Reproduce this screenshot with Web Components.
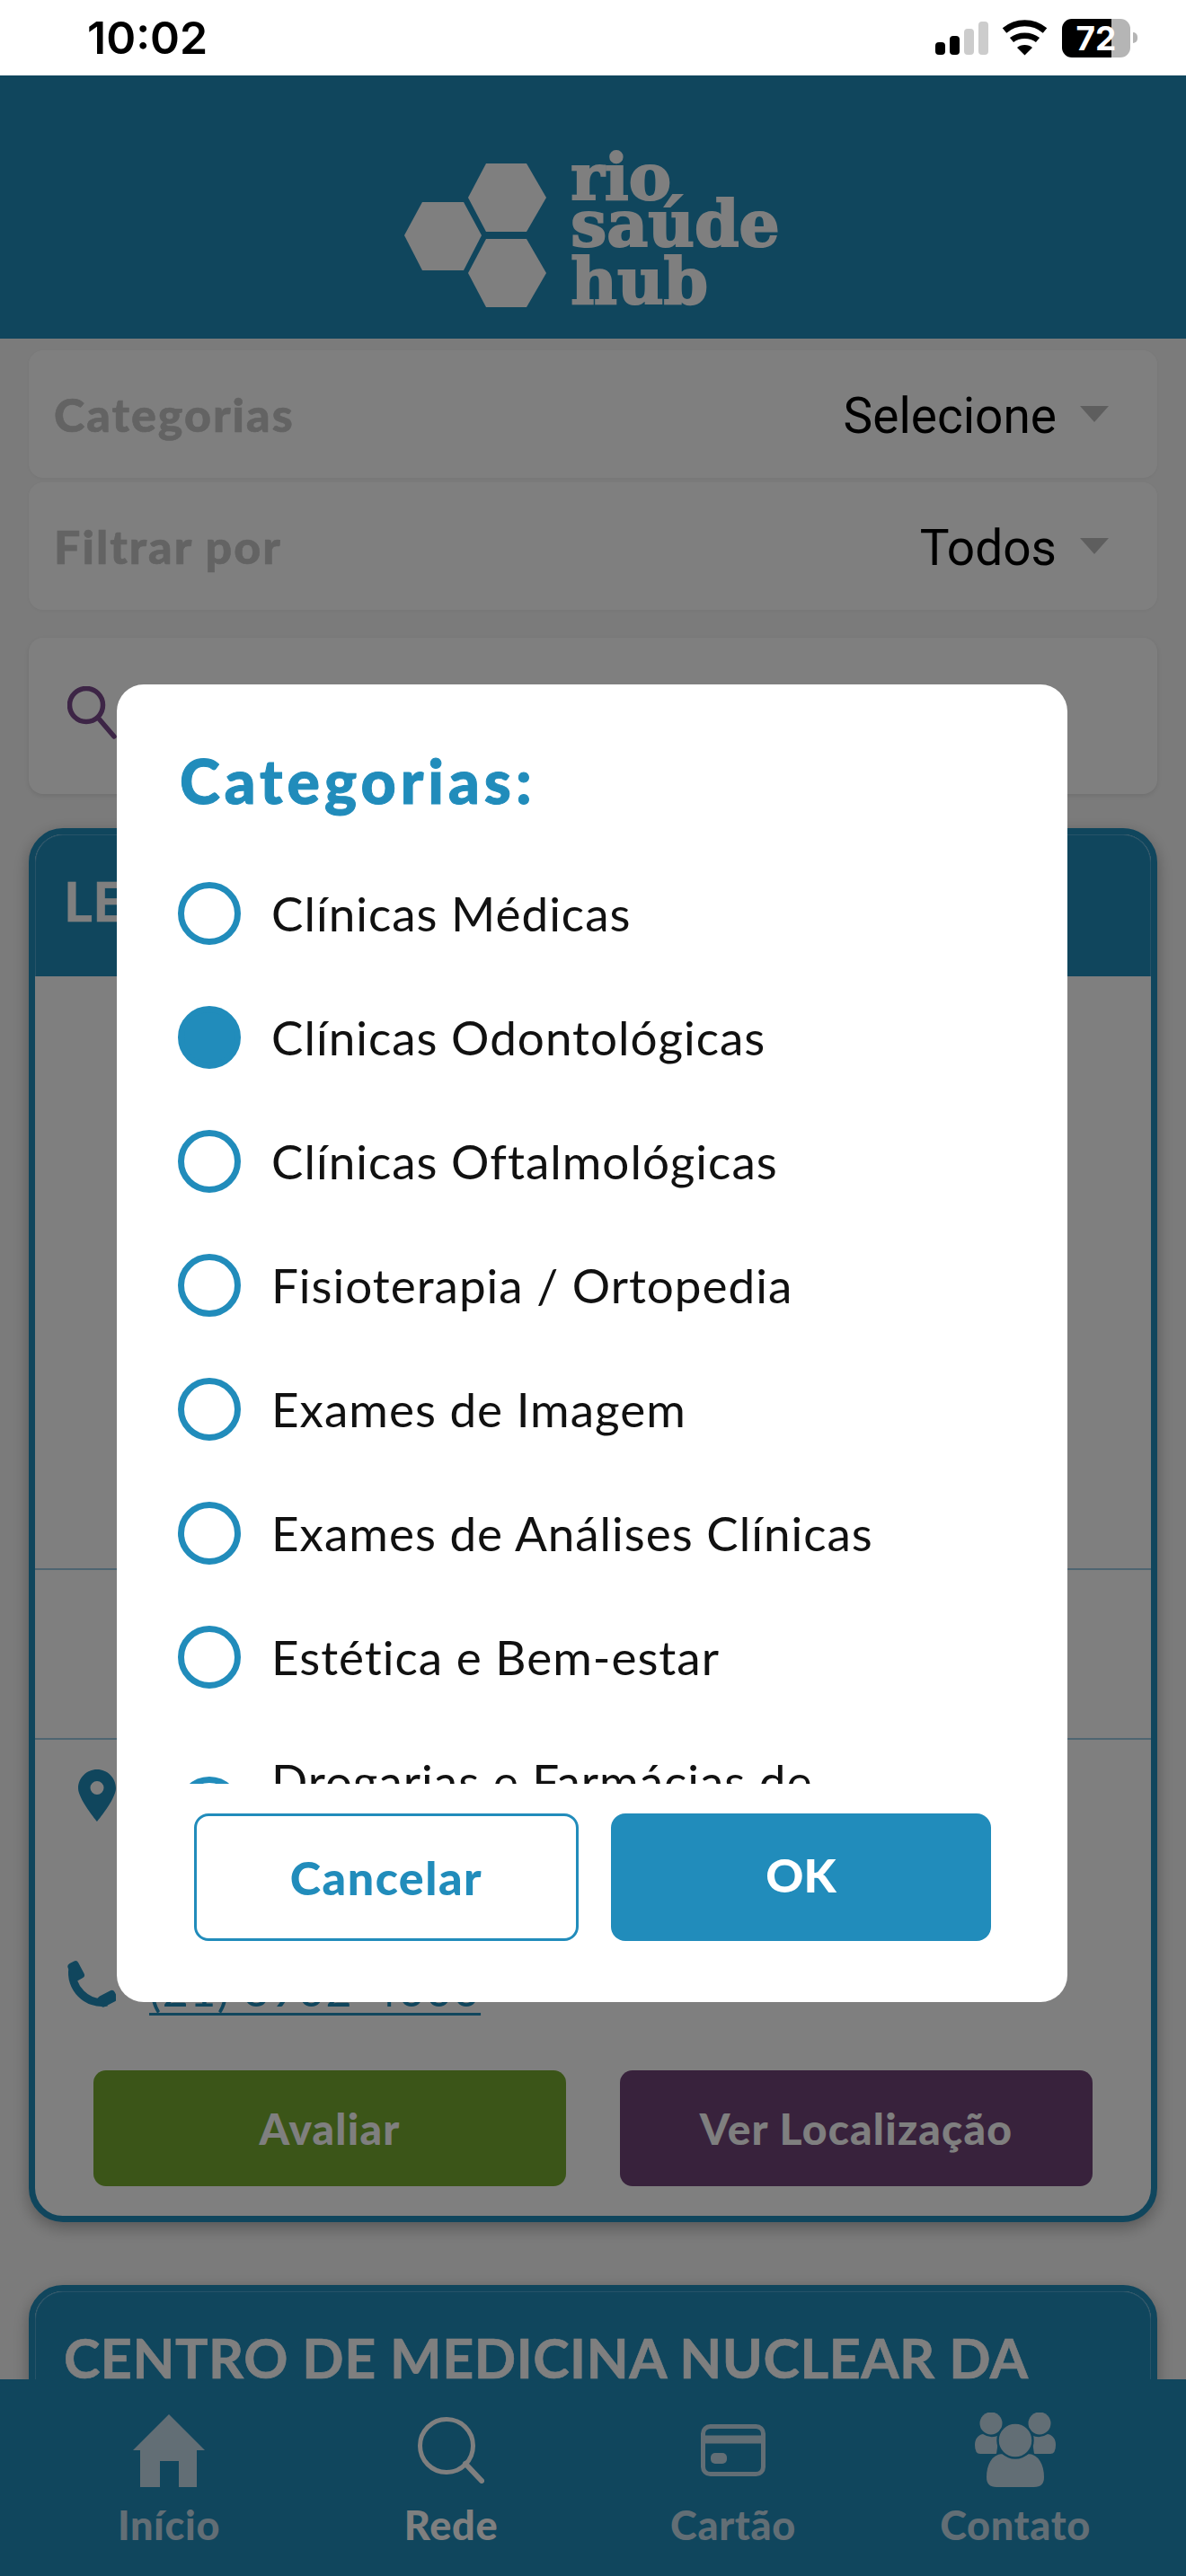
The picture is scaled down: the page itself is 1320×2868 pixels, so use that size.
<!DOCTYPE html>
<html lang="pt-BR">
<head>
<meta charset="utf-8">
<title>Rio Saúde Hub</title>
<style>
    html, body { margin: 0; padding: 0; background: #f7f7f7; }
    body { width: 1320px; height: 2868px; overflow: hidden; font-family: "Lato", "Liberation Sans", sans-serif; }
</style>
</head>
<body>
<app-shell>
    <status-bar></status-bar>
    <app-header></app-header>
    <page-content>
        <filter-row label="Categorias" value="Selecione"></filter-row>
        <filter-row label="Filtrar por" value="Todos"></filter-row>
        <search-box></search-box>
        <clinic-card title-text="LE" phone="(21) 3902-4000"></clinic-card>
        <clinic-card title-text="CENTRO DE MEDICINA NUCLEAR DA"></clinic-card>
    </page-content>
    <tab-bar></tab-bar>
</app-shell>
<category-dialog>
    <radio-row>Clínicas Médicas</radio-row>
    <radio-row checked>Clínicas Odontológicas</radio-row>
    <radio-row>Clínicas Oftalmológicas</radio-row>
    <radio-row>Fisioterapia / Ortopedia</radio-row>
    <radio-row>Exames de Imagem</radio-row>
    <radio-row>Exames de Análises Clínicas</radio-row>
    <radio-row>Estética e Bem-estar</radio-row>
    <radio-row>Drogarias e Farmácias de Manipulação</radio-row>
</category-dialog>

<script>
class Base extends HTMLElement {
    constructor() {
        super();
        this.shadowDOM = this.attachShadow({ mode: "open" });
    }

    connectedCallback() {
        this.render();
    }
}

class AppShell extends Base {
    render() {
        this.shadowDOM.innerHTML = `
        <style>
        :host { display: flex; flex-direction: column; width: 1320px; height: 2868px; overflow: hidden; }
        </style>
        <slot></slot>`;
    }
}

class StatusBar extends Base {
    render() {
        this.shadowDOM.innerHTML = `
        <style>
        :host { display: flex; align-items: center; justify-content: space-between; height: 84px; flex: none; background: #fff; padding: 0 54px 0 97px; box-sizing: border-box; }
        .time { font: 600 50px "Inter", sans-serif; color: #000; }
        .icons { display: flex; align-items: center; }
        .bars { display: flex; align-items: flex-end; gap: 5px; height: 37px; margin-right: 15px; }
        .bars i { display: block; width: 11px; border-radius: 4px; background: #000; }
        .bars i.off { background: #ccc; }
        .wifi { display: block; margin-right: 16px; }
        .battery { position: relative; width: 76px; height: 43px; border-radius: 11px; background: linear-gradient(90deg, #000 72.4%, #b5b5b5 72.4%); color: #fff; font: 700 37px "Inter", sans-serif; text-align: center; line-height: 43px; }
        .cap { width: 5px; height: 12px; margin-left: 3px; background: #b5b5b5; border-radius: 0 6px 6px 0; }
        </style>
        <span class="time">10:02</span>
        <div class="icons">
            <div class="bars">
                <i style="height:14px"></i><i style="height:21px"></i><i class="off" style="height:29px"></i><i class="off" style="height:37px"></i>
            </div>
            <svg class="wifi" width="51" height="40" viewBox="0 0 51 40" fill="none" stroke="#000">
                <path d="M3 12C16 1 35 1 48 12" stroke-width="7"/>
                <path d="M11 22.5C19 16 32 16 40 22.5" stroke-width="6.5"/>
                <path d="M17 31C21 27 30 27 34 31L25.5 39.5Z" fill="#000" stroke="none"/>
            </svg>
            <div class="battery">72</div>
            <div class="cap"></div>
        </div>`;
    }
}

class AppHeader extends Base {
    render() {
        this.shadowDOM.innerHTML = `
        <style>
        :host { display: flex; justify-content: center; height: 293px; flex: none; background: #218cbb; padding-top: 83px; box-sizing: border-box; }
        .logo { display: flex; gap: 27px; height: 180px; margin-right: 2px; }
        svg { display: block; margin-top: 15px; }
        .word { display: flex; flex-direction: column; font: 700 71px "DejaVu Serif", serif; color: #fff; -webkit-text-stroke: 2px #fff; }
        .word span { display: block; }
        </style>
        <div class="logo">
            <svg width="158" height="160" viewBox="0 0 158 160" fill="#fff">
                <polygon points="71,38 91,0 136,0 158,38 136,76 91,76"/>
                <polygon points="71,122 91,84 136,84 158,122 136,160 91,160"/>
                <polygon points="0,80 20,43 66,43 86,80 66,119 20,119"/>
            </svg>
            <div class="word">
                <span style="line-height:58px;margin-top:1px">rio</span>
                <span style="line-height:52px;margin-top:-3px">saúde</span>
                <span style="line-height:62px;margin-top:7px">hub</span>
            </div>
        </div>`;
    }
}

class PageContent extends Base {
    render() {
        this.shadowDOM.innerHTML = `
        <style>
        :host { display: flex; flex-direction: column; flex: 1; min-height: 0; overflow: hidden; padding: 13px 32px 0; background: #f7f7f7; }
        </style>
        <slot></slot>`;
    }
}

class FilterRow extends Base {
    render() {
        this.shadowDOM.innerHTML = `
        <style>
        :host { display: flex; align-items: center; flex: none; height: 142px; margin-bottom: 5px; padding: 0 54px 0 28px; box-sizing: border-box; background: #fff; border-radius: 16px; box-shadow: 0 1px 4px rgba(0,0,0,.05); }
        .label { flex: 1; font: 900 52px "Lato", sans-serif; letter-spacing: 2px; color: #c6c6c6; -webkit-text-stroke: .6px #c6c6c6; }
        .value { font: 400 55px "Roboto", sans-serif; color: #000; margin: 3px 26px 0 0; }
        .arrow { width: 0; height: 0; border-left: 16px solid transparent; border-right: 16px solid transparent; border-top: 18px solid #bdbdbd; }
        </style>
        <span class="label">${this.getAttribute("label")}</span>
        <span class="value">${this.getAttribute("value")}</span>
        <span class="arrow"></span>`;
    }
}

class SearchBox extends Base {
    render() {
        this.shadowDOM.innerHTML = `
        <style>
        :host { display: flex; align-items: center; flex: none; height: 174px; margin: 26px 0 38px; padding-left: 43px; box-sizing: border-box; background: #fff; border-radius: 16px; box-shadow: 0 2px 6px rgba(0,0,0,.1); }
        svg { display: block; margin-top: -6px; }
        </style>
        <svg width="60" height="60" viewBox="0 0 60 60" fill="none" stroke="#7a4a8c" stroke-width="5.5">
            <circle cx="21" cy="21" r="18.5"/>
            <path d="M34 35L52 56" stroke-linecap="round"/>
        </svg>`;
    }
}

class ClinicCard extends Base {
    render() {
        const phone = this.getAttribute("phone");
        this.shadowDOM.innerHTML = `
        <style>
        :host { display: block; flex: none; margin-bottom: 70px; border: 7px solid #218cbb; border-radius: 38px; background: #fff; box-shadow: 0 6px 18px rgba(0,0,0,.3); }
        header { height: 158px; padding: 41px 0 0 31px; box-sizing: border-box; background: #218cbb; border: 1px solid #4ea6d0; border-bottom: 0; border-radius: 31px 31px 0 0; }
        h2 { margin: 0; font: 700 61px/64px "Lato", sans-serif; letter-spacing: .5px; color: #fff; white-space: nowrap; -webkit-text-stroke: .6px #fff; }
        .photo { height: 659px; border-bottom: 2px solid #9ccbe2; box-sizing: content-box; margin-top: 0; }
        .rating { height: 187px; border-bottom: 2px solid #9ccbe2; }
        .address { height: 246px; padding: 33px 0 0 48px; box-sizing: border-box; }
        .phone { display: flex; align-items: flex-start; height: 122px; padding-left: 34px; }
        .phone a { font: 400 50px/60px "Lato", sans-serif; letter-spacing: 1.5px; color: #218cbb; text-decoration: underline 3px; text-underline-offset: 7px; margin: 2px 0 0 37px; }
        .actions { display: grid; grid-template-columns: 1fr 1fr; gap: 60px; padding: 0 65px 33px; }
        .actions button { height: 129px; border: 0; border-radius: 14px; color: #fff; font: 900 48px "Lato", sans-serif; letter-spacing: 1.2px; }
        </style>
        <header><h2>${this.getAttribute("title-text")}</h2></header>
        ${phone ? `
        <div class="photo"></div>
        <div class="rating"></div>
        <div class="address">
            <svg width="42" height="58" viewBox="0 0 42 58"><path fill="#218cbb" fill-rule="evenodd" d="M21 0C9.4 0 0 9.4 0 21c0 12 21 37 21 37s21-25 21-37C42 9.4 32.6 0 21 0zm0 13a7.500 7.500 0 1 1 0 15 7.500 7.500 0 0 1 0-15z"/></svg>
        </div>
        <div class="phone">
            <svg width="56" height="54" viewBox="0 0 56 54" fill="#218cbb">
                <path d="M8 8C4 30 24 50 46 46" fill="none" stroke="#218cbb" stroke-width="9"/>
                <rect x="5" y="1" width="13" height="21" rx="4" transform="rotate(-28 11 11)"/>
                <rect x="36" y="36" width="21" height="13" rx="4" transform="rotate(-28 46 42)"/>
            </svg>
            <a>${phone}</a>
        </div>
        <div class="actions">
            <button style="background:#76aa30">Avaliar</button>
            <button style="background:#704478">Ver Localização</button>
        </div>` : ""}`;
    }
}

class TabBar extends Base {
    render() {
        this.shadowDOM.innerHTML = `
        <style>
        :host { display: grid; grid-template-columns: repeat(4, 314px); flex: none; height: 219px; padding: 37px 0 0 31px; box-sizing: border-box; background: #218cbb; position: relative; }
        .tab { display: flex; flex-direction: column; align-items: center; color: #c4dceb; font: 900 45px/50px "Lato", sans-serif; letter-spacing: .7px; }
        .tab.on { color: #fff; }
        .icon { display: flex; align-items: center; justify-content: center; height: 84px; margin-bottom: 16px; }
        svg { display: block; }
        </style>
        <div class="tab">
            <div class="icon"><svg width="80" height="81" viewBox="0 0 80 81" fill="#c4dceb"><path fill-rule="evenodd" d="M40 0L80 40H71V81H8V40H0ZM30 52V81H51V52Z"/></svg></div>
            Início
        </div>
        <div class="tab on">
            <div class="icon"><svg width="74" height="74" viewBox="0 0 74 74" fill="none" stroke="#fff"><circle cx="32" cy="32" r="29.500" stroke-width="5"/><path d="M53 52L71 71" stroke-width="6" stroke-linecap="round"/></svg></div>
            Rede
        </div>
        <div class="tab">
            <div class="icon"><svg width="72" height="58" viewBox="0 0 72 58" fill="none" stroke="#c4dceb"><rect x="2.500" y="2.500" width="67" height="53" rx="8" stroke-width="5"/><path d="M2 17H70" stroke-width="9"/><rect x="11" y="32" width="18" height="12" rx="5" fill="#c4dceb" stroke="none"/></svg></div>
            Cartão
        </div>
        <div class="tab">
            <div class="icon"><svg width="90" height="84" viewBox="0 0 90 84" fill="#c4dceb">
                <circle cx="18" cy="12" r="12.500"/><circle cx="72" cy="12" r="12.500"/>
                <path d="M0 36C0 30 3 25 9 24Q18 30 27 25L24 46H6Q0 46 0 36Z"/>
                <path d="M90 36C90 30 87 25 81 24Q72 30 63 25L66 46H84Q90 46 90 36Z"/>
                <path d="M12 72C12 58 18 46 30 45Q45 54 60 45C72 46 78 58 78 72Q78 84 66 84H24Q12 84 12 72Z" stroke="#218cbb" stroke-width="2"/>
                <circle cx="45" cy="31" r="19.500" stroke="#218cbb" stroke-width="2.500"/>
            </svg></div>
            Contato
        </div>`;
    }
}

class RadioRow extends Base {
    render() {
        const on = this.hasAttribute("checked");
        this.shadowDOM.innerHTML = `
        <style>
        :host { display: flex; align-items: center; padding: 39px 60px 39px 68px; gap: 34px; font: 400 53px/60px "Lato", sans-serif; letter-spacing: 1px; color: #111; }
        .dot { flex: none; width: 70px; height: 70px; box-sizing: border-box; border-radius: 50%; border: 7px solid #218cbb; background: ${on ? "#218cbb" : "#fff"}; margin: -5px 0; }
        </style>
        <span class="dot"></span>
        <span><slot></slot></span>`;
    }
}

class CategoryDialog extends Base {
    render() {
        this.shadowDOM.innerHTML = `
        <style>
        :host { position: fixed; left: 0; top: 84px; width: 1320px; height: 2784px; box-sizing: border-box; padding: 678px 0 0 130px; background: rgba(0,0,0,.5); z-index: 5; }
        .box { display: flex; flex-direction: column; width: 1058px; height: 1467px; background: #fff; border-radius: 30px; }
        h1 { margin: 0; height: 186px; padding: 72px 0 0 70px; box-sizing: border-box; font: 900 68px/70px "Lato", sans-serif; letter-spacing: 5px; color: #218cbb; -webkit-text-stroke: 1px #218cbb; }
        .list { height: 1038px; overflow: hidden; flex: none; }
        .buttons { display: flex; gap: 36px; margin: 33px 0 0 86px; }
        button { height: 142px; border-radius: 16px; font: 900 52px "Lato", sans-serif; }
        .cancel { width: 428px; background: #fff; border: 3px solid #218cbb; color: #218cbb; letter-spacing: 1.5px; }
        .ok { width: 423px; background: #218cbb; border: 0; color: #fff; padding-bottom: 8px; }
        </style>
        <div class="box">
            <h1>Categorias:</h1>
            <div class="list"><slot></slot></div>
            <div class="buttons">
                <button class="cancel">Cancelar</button>
                <button class="ok">OK</button>
            </div>
        </div>`;
    }
}

customElements.define("app-shell", AppShell);
customElements.define("status-bar", StatusBar);
customElements.define("app-header", AppHeader);
customElements.define("page-content", PageContent);
customElements.define("filter-row", FilterRow);
customElements.define("search-box", SearchBox);
customElements.define("clinic-card", ClinicCard);
customElements.define("tab-bar", TabBar);
customElements.define("radio-row", RadioRow);
customElements.define("category-dialog", CategoryDialog);
</script>
</body>
</html>
